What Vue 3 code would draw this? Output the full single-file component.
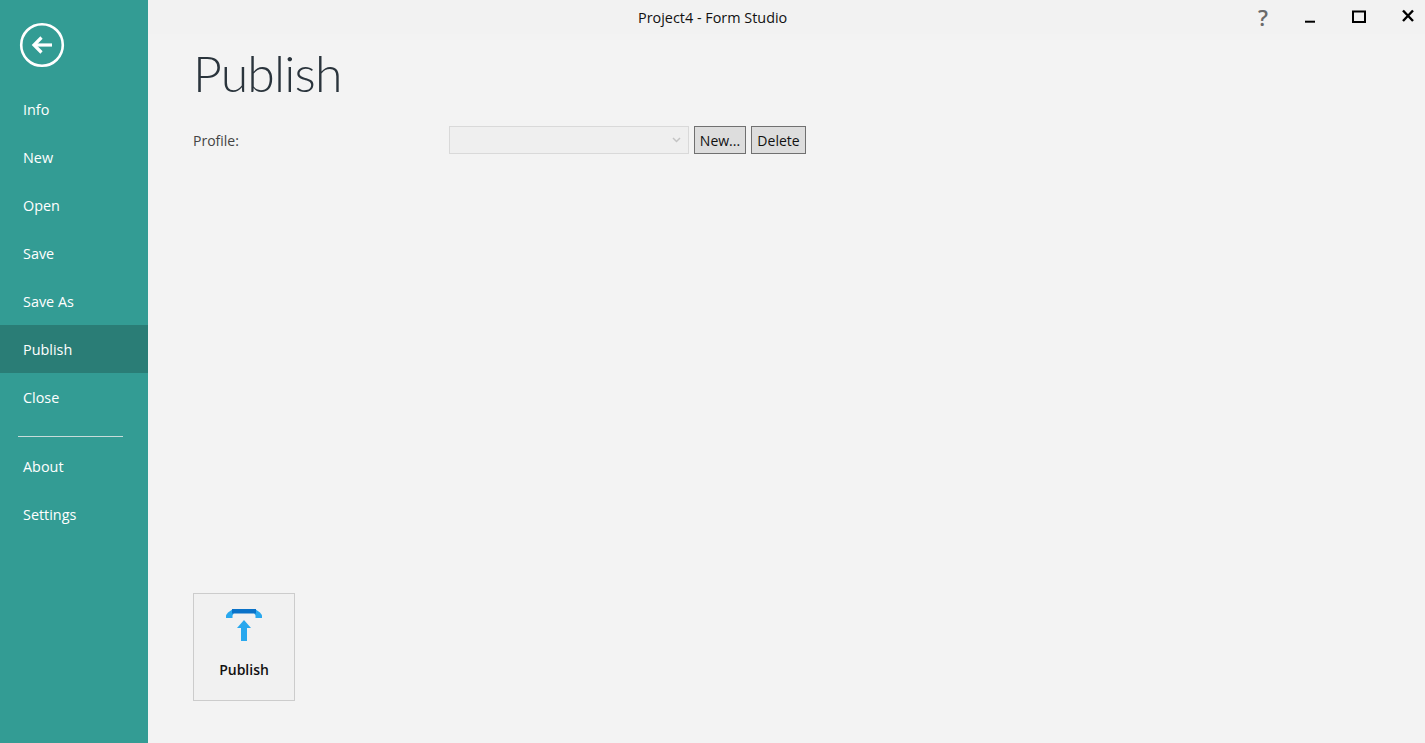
<script setup>
const topItems = ['Info', 'New', 'Open', 'Save', 'Save As', 'Publish', 'Close']
const bottomItems = ['About', 'Settings']
</script>

<template>
  <div class="window">
    <aside class="sidebar">
      <div class="back-wrap">
        <svg class="back" width="46" height="46" viewBox="0 0 46 46" fill="none" stroke="#fff">
          <circle cx="23" cy="23" r="20.8" stroke-width="2.6" />
          <path d="M33 23H15" stroke-width="3.2" />
          <path d="M22.5 15.500L15 23l7.500 7.500" stroke-width="3.2" />
        </svg>
      </div>
      <nav>
        <div
          v-for="item in topItems"
          :key="item"
          class="nav-item"
          :class="{ active: item === 'Publish' }"
        >{{ item }}</div>
        <div class="divider"></div>
        <div v-for="item in bottomItems" :key="item" class="nav-item">{{ item }}</div>
      </nav>
    </aside>

    <main class="content">
      <header class="titlebar">
        <div class="app-title">Project4 - Form Studio</div>
        <div class="win-buttons">
          <span class="help">?</span>
          <svg width="48" height="34" viewBox="0 0 48 34"><path d="M19 21.700h10" stroke="#000" stroke-width="2" /></svg>
          <svg width="50" height="34" viewBox="0 0 50 34" fill="none"><rect x="19" y="11.500" width="12" height="10.500" stroke="#000" stroke-width="2" /></svg>
          <svg width="41" height="34" viewBox="0 0 41 34" fill="none"><path d="M19 10.500l10 10.500M29 10.500l-10 10.500" stroke="#000" stroke-width="2.400" /></svg>
        </div>
      </header>

      <div class="body">
        <h1>Publish</h1>
        <div class="profile-row">
          <label>Profile:</label>
          <div class="select">
            <svg width="9" height="6" viewBox="0 0 9 6" fill="none"><path d="M1 1l3.500 3.500L8 1" stroke="#c4c4c4" stroke-width="1.500" /></svg>
          </div>
          <button class="btn btn-new">New...</button>
          <button class="btn btn-delete">Delete</button>
        </div>

        <div class="spacer"></div>

        <div class="publish-tile">
          <svg width="38" height="36" viewBox="0 0 38 36" fill="none">
            <path d="M8 3L3 6.500Q1 8.500 1 10.500V12H7.500V9.500L9 7z" fill="#29a8ee" />
            <path d="M30 3L35 6.500Q37 8.500 37 10.500V12H30.500V9.500L29 7z" fill="#29a8ee" />
            <rect x="7" y="3" width="24" height="4.500" fill="#0a72c8" />
            <path d="M19 14l7 8h-4v13h-6V22h-4z" fill="#29a8ee" />
          </svg>
          <span>Publish</span>
        </div>
      </div>
    </main>
  </div>
</template>

<style>
body {
  margin: 0;
  overflow: hidden;
}
</style>

<style scoped>
.window {
  display: flex;
  width: 1425px;
  height: 743px;
  background: #f3f3f3;
  font-family: "Open Sans", "Noto Sans", sans-serif;
  overflow: hidden;
}

.sidebar {
  width: 148px;
  flex-shrink: 0;
  background: #339c94;
  color: #fff;
}

.back-wrap {
  height: 85px;
  padding: 22px 0 0 19px;
  box-sizing: border-box;
}

.back {
  display: block;
}

.nav-item {
  height: 48px;
  line-height: 50px;
  padding-left: 23px;
  font-size: 14.4px;
}

.nav-item.active {
  background: #2a7d76;
}

.divider {
  width: 105px;
  height: 1px;
  margin: 15px 0 5px 18px;
  background: #c8dcda;
}

.content {
  flex: 1;
  display: flex;
  flex-direction: column;
  min-width: 0;
}

.titlebar {
  height: 34px;
  display: flex;
  position: relative;
  flex-shrink: 0;
  background: #f2f2f2;
}

.app-title {
  position: absolute;
  left: 490px;
  top: 8px;
  font-size: 14.4px;
  line-height: 20px;
  color: #111;
}

.win-buttons {
  margin-left: auto;
  display: flex;
  align-items: flex-start;
}

.win-buttons svg {
  display: block;
}

.help {
  width: 30px;
  margin-right: 8px;
  font-size: 22px;
  font-weight: 600;
  line-height: 34px;
  text-align: center;
  color: #6a6a6a;
}

.body {
  flex: 1;
  display: flex;
  flex-direction: column;
  padding: 0 0 42px 45px;
}

h1 {
  margin: 3px 0 2px;
  font-family: Lato, "Open Sans", sans-serif;
  font-size: 50px;
  line-height: 72px;
  font-weight: 300;
  letter-spacing: -0.85px;
  color: #2a343c;
}

.profile-row {
  display: flex;
  align-items: center;
  margin-top: 15px;
  height: 28px;
}

label {
  width: 256px;
  font-size: 14px;
  color: #444;
}

.select {
  width: 240px;
  height: 28px;
  box-sizing: border-box;
  border: 1px solid #d9d9d9;
  background: #efefef;
  display: flex;
  align-items: center;
  justify-content: flex-end;
  padding-right: 7px;
}

.btn {
  height: 28px;
  padding: 0;
  box-sizing: border-box;
  border: 1px solid #707070;
  background: #dddddd;
  font-family: inherit;
  font-size: 14px;
  color: #111;
}

.btn-new {
  width: 52px;
  margin-left: 5px;
}

.btn-delete {
  width: 55px;
  margin-left: 5px;
}

.spacer {
  flex: 1;
}

.publish-tile {
  width: 102px;
  height: 108px;
  box-sizing: border-box;
  border: 1px solid #cccccc;
  background: #f1f1f1;
  display: flex;
  flex-direction: column;
  align-items: center;
  padding-top: 12px;
}

.publish-tile span {
  margin-top: 18px;
  font-size: 14px;
  font-weight: 600;
  color: #111;
}
</style>
